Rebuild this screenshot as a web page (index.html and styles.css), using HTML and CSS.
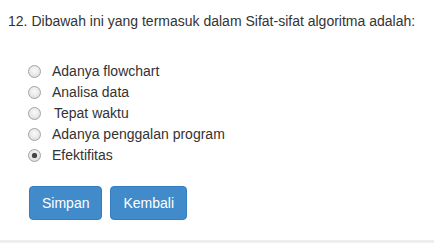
FILE: index.html
```html
<!DOCTYPE html>
<html>
<head>
<meta charset="utf-8">
<link rel="stylesheet" href="styles.css">
</head>
<body>
<div class="page">
  <div class="question">
    <span class="num">12.</span>
    <span class="text">Dibawah ini yang termasuk dalam Sifat-sifat algoritma adalah:</span>
  </div>
  <div class="options">
    <label class="opt"><span class="radio"></span><span class="lbl">Adanya flowchart</span></label>
    <label class="opt"><span class="radio"></span><span class="lbl">Analisa data</span></label>
    <label class="opt"><span class="radio"></span><span class="lbl shift">Tepat waktu</span></label>
    <label class="opt"><span class="radio"></span><span class="lbl">Adanya penggalan program</span></label>
    <label class="opt"><span class="radio checked"></span><span class="lbl">Efektifitas</span></label>
  </div>
  <div class="actions">
    <button class="btn">Simpan</button>
    <button class="btn">Kembali</button>
  </div>
</div>
<div class="footer"></div>
</body>
</html>
```
FILE: styles.css
```css
html, body {
  margin: 0;
  padding: 0;
  background: #fff;
}
body {
  font-family: "Liberation Sans", Arial, sans-serif;
  font-size: 14px;
  color: #333;
}
.page {
  height: 240px;
  box-sizing: border-box;
  padding-top: 11px;
}
.question {
  display: flex;
  gap: 4px;
  padding-left: 8px;
  line-height: 20px;
}
.options {
  display: flex;
  flex-direction: column;
  margin-top: 30px;
  padding-left: 28px;
}
.opt {
  display: flex;
  align-items: center;
  height: 21px;
  line-height: 21px;
}
.radio {
  width: 11px;
  height: 11px;
  border-radius: 50%;
  border: 1px solid #a3a3a3;
  background: radial-gradient(circle at 50% 40%, #fafafa 0%, #e6e6e6 60%, #cfcfcf 100%);
  margin-right: 11px;
  position: relative;
  flex: none;
}
.radio.checked::after {
  content: "";
  position: absolute;
  left: 3px;
  top: 3px;
  width: 5px;
  height: 5px;
  border-radius: 50%;
  background: #444;
  box-shadow: 0 0 1px #666;
}
.lbl.shift {
  margin-left: 2px;
}
.actions {
  display: flex;
  gap: 8px;
  margin-top: 20px;
  padding-left: 29px;
}
.btn {
  font-family: "Liberation Sans", Arial, sans-serif;
  font-size: 14px;
  line-height: 20px;
  padding: 6px 12px;
  color: #fff;
  background: #428bca;
  border: 1px solid #357ebd;
  border-radius: 4px;
  cursor: pointer;
}
.footer {
  height: 3px;
  background: #eeeeee;
}
```
